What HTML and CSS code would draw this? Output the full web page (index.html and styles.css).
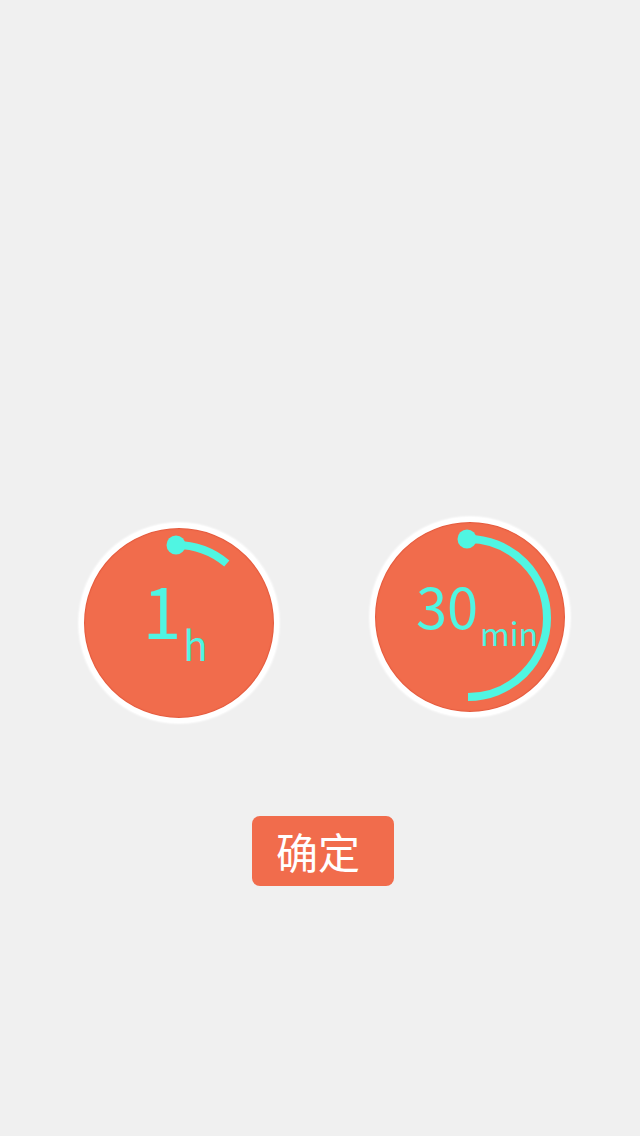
FILE: index.html
```html
<!DOCTYPE html>
<html lang="zh">
<head>
<meta charset="utf-8">
<title>定时</title>
<link rel="stylesheet" href="styles.css">
</head>
<body>
<main class="page">
  <section class="dials">
    <div class="dial dial-hours">
      <svg class="ring" viewBox="0 0 200 200" width="200" height="200">
        <path d="M97 22 A79 79 0 0 1 147.8 40.5" class="arc"/>
        <circle cx="97" cy="22" r="9.5" class="knob"/>
      </svg>
      <div class="readout readout-hours">
        <span class="num num-hours">1</span><span class="unit unit-hours">h</span>
      </div>
    </div>
    <div class="dial dial-mins">
      <svg class="ring" viewBox="0 0 200 200" width="200" height="200">
        <path d="M98 22 A79 79 0 0 1 98 180" class="arc"/>
        <circle cx="97" cy="22" r="9.5" class="knob"/>
      </svg>
      <div class="readout readout-mins">
        <span class="num num-mins">30</span><span class="unit unit-mins">min</span>
      </div>
    </div>
  </section>
  <div class="actions">
    <button class="confirm" type="button">确定</button>
  </div>
</main>
</body>
</html>
```
FILE: styles.css
```css
html, body {
  margin: 0;
  padding: 0;
  background: #f0f0f0;
}
body {
  width: 640px;
  height: 1136px;
  overflow: hidden;
  font-family: "Noto Sans CJK SC", "Noto Sans", sans-serif;
}
.page {
  display: flex;
  flex-direction: column;
}
.dials {
  display: flex;
  align-items: flex-start;
  gap: 91px;
  padding-top: 517px;
  padding-left: 79px;
}
.dial {
  position: relative;
  box-sizing: border-box;
  width: 200px;
  height: 200px;
  border-radius: 50%;
  background: #f16c4c;
  border: 5px solid #ffffff;
  box-shadow: 0 0 2px 1px rgba(255,255,255,0.9), inset 0 0 1px 1px #e35a3e;
  display: flex;
  align-items: center;
  justify-content: center;
}
.dial-hours {
  margin-top: 6px;
}
.ring {
  position: absolute;
  left: -5px;
  top: -5px;
}
.arc {
  fill: none;
  stroke: #50f5e2;
  stroke-width: 8;
  stroke-linecap: butt;
}
.knob {
  fill: #50f5e2;
}
.readout {
  color: #50f5e2;
  white-space: nowrap;
  line-height: 1;
}
.num, .unit {
  display: inline-block;
}
.num-hours {
  font-size: 70px;
  vertical-align: baseline;
}
.unit-hours {
  font-size: 40px;
  vertical-align: -22px;
  margin-left: 2px;
}
.readout-hours {
  margin-left: -8px;
  margin-top: -8px;
}
.num-mins {
  font-size: 56px;
}
.unit-mins {
  font-size: 32px;
  vertical-align: -17px;
  margin-left: 2px;
}
.readout-mins {
  margin-left: 14px;
  margin-top: -10px;
}
.actions {
  display: flex;
  justify-content: center;
  padding-top: 93px;
  padding-left: 6px;
}
.confirm {
  box-sizing: border-box;
  width: 142px;
  height: 70px;
  border: none;
  border-radius: 8px;
  background: #f16c4c;
  color: #ffffff;
  font-family: "Noto Sans CJK SC", "Noto Sans", sans-serif;
  font-size: 42px;
  line-height: 1;
  padding: 0 34px 0 24px;
  text-align: left;
  white-space: nowrap;
}
```
